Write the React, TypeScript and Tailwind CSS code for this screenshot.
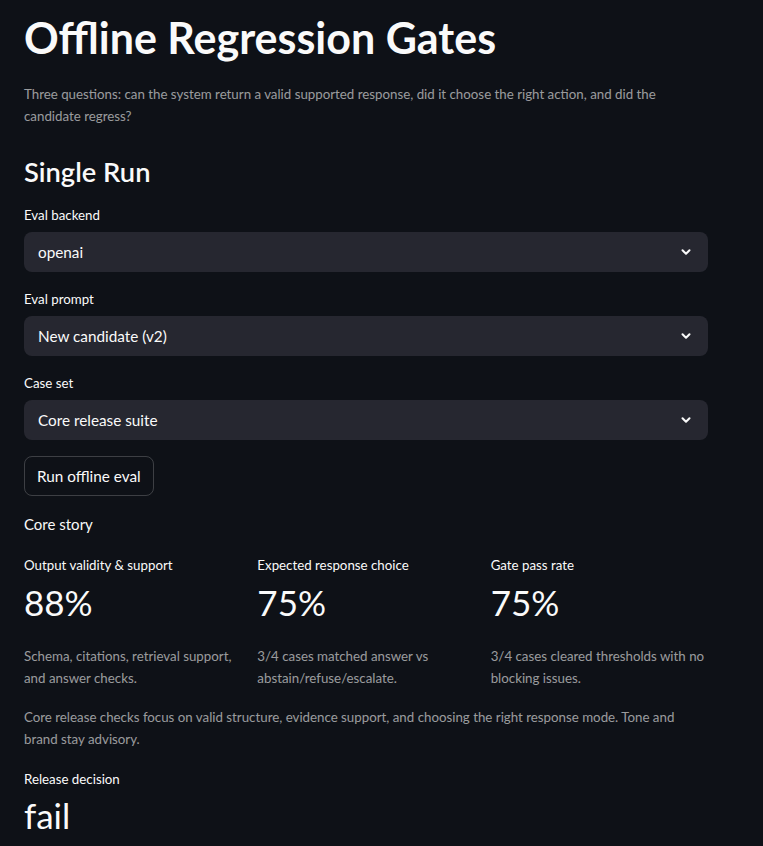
import React from "react";

const font = { fontFamily: '"Source Sans Pro", Lato, "Noto Sans", sans-serif' };

function Chevron() {
  return (
    <svg width="14" height="14" viewBox="0 0 24 24" fill="none" stroke="#fafafa" strokeWidth="3.5" strokeLinecap="round" strokeLinejoin="round">
      <path d="M6 9l6 6 6-6" />
    </svg>
  );
}

function Select({ label, value }: { label: string; value: string }) {
  return (
    <div className="flex flex-col">
      <div className="text-[13.3px] leading-[22px] text-[#fafafa] mb-[6px]">{label}</div>
      <div className="h-[40px] rounded-[8px] bg-[#262730] flex items-center justify-between pl-[14px] pr-[15px]">
        <span className="text-[15.3px] text-[#fafafa]">{value}</span>
        <Chevron />
      </div>
    </div>
  );
}

function Metric({ label, value, caption }: { label: string; value: string; caption: string }) {
  return (
    <div className="flex flex-col">
      <div className="text-[13.3px] leading-[20px] text-[#fafafa]">{label}</div>
      <div className="text-[35px] leading-[48px] text-[#fafafa] mt-[3px]">{value}</div>
      <div className="text-[13.3px] leading-[22px] text-[rgba(250,250,250,0.6)] mt-[19px]">{caption}</div>
    </div>
  );
}

export default function App() {
  return (
    <div className="min-h-[846px] bg-[#0e1117] text-[#fafafa]" style={font}>
      <div className="w-[684px] ml-[24px] pt-[12px] flex flex-col">
        <h1 className="text-[43px] leading-[52px] font-bold">Offline Regression Gates</h1>
        <p className="text-[13.3px] leading-[22px] text-[rgba(250,250,250,0.6)] mt-[19px]">
          Three questions: can the system return a valid supported response, did it choose the right action, and did the candidate regress?
        </p>
        <h3 className="text-[27.3px] leading-[36px] font-semibold mt-[27px]">Single Run</h3>
        <div className="flex flex-col gap-[16px] mt-[14px]">
          <Select label="Eval backend" value="openai" />
          <Select label="Eval prompt" value="New candidate (v2)" />
          <Select label="Case set" value="Core release suite" />
          <div>
            <button className="h-[40px] px-[12px] rounded-[8px] border border-[rgba(250,250,250,0.2)] bg-transparent text-[15.3px] text-[#fafafa]">
              Run offline eval
            </button>
          </div>
          <div className="text-[15px] leading-[24px]">Core story</div>
          <div className="grid grid-cols-3 gap-[16px] mt-[3px]">
            <Metric label="Output validity & support" value="88%" caption="Schema, citations, retrieval support, and answer checks." />
            <Metric label="Expected response choice" value="75%" caption="3/4 cases matched answer vs abstain/refuse/escalate." />
            <Metric label="Gate pass rate" value="75%" caption="3/4 cases cleared thresholds with no blocking issues." />
          </div>
          <p className="text-[13.3px] leading-[22px] text-[rgba(250,250,250,0.6)] mt-[1px]">
            Core release checks focus on valid structure, evidence support, and choosing the right response mode. Tone and brand stay advisory.
          </p>
          <div className="flex flex-col mt-[3px]">
            <div className="text-[13.3px] leading-[20px]">Release decision</div>
            <div className="text-[35px] leading-[48px] mt-[2px]">fail</div>
          </div>
        </div>
      </div>
    </div>
  );
}
